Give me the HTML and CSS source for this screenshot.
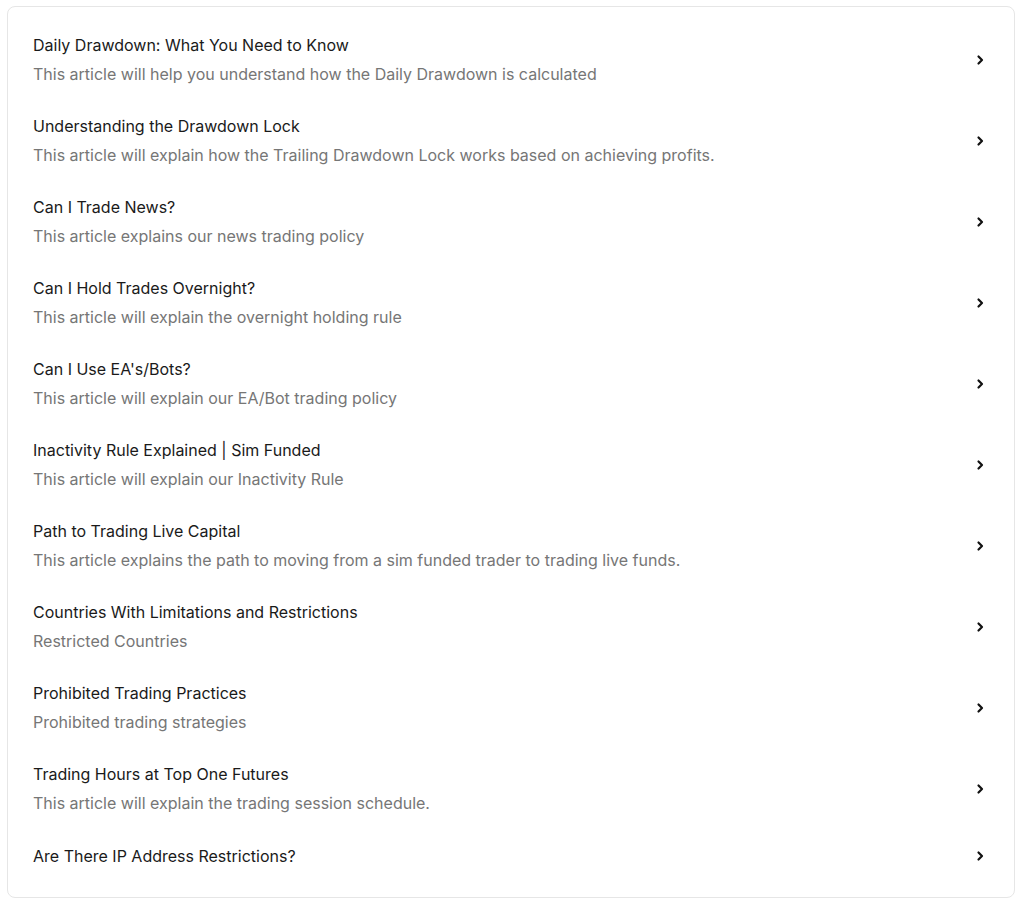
FILE: index.html
```html
<!DOCTYPE html>
<html lang="en">
<head>
<meta charset="utf-8">
<link rel="stylesheet" href="styles.css">
</head>
<body>
<div class="card">
  <a class="row"><div class="text"><div class="title">Daily Drawdown: What You Need to Know</div><div class="desc">This article will help you understand how the Daily Drawdown is calculated</div></div><svg class="chev" viewBox="0 0 8 12"><path d="M2.5 2.5l3.5 3.5-3.5 3.5"/></svg></a>
  <a class="row"><div class="text"><div class="title">Understanding the Drawdown Lock</div><div class="desc">This article will explain how the Trailing Drawdown Lock works based on achieving profits.</div></div><svg class="chev" viewBox="0 0 8 12"><path d="M2.5 2.5l3.5 3.5-3.5 3.5"/></svg></a>
  <a class="row"><div class="text"><div class="title">Can I Trade News?</div><div class="desc">This article explains our news trading policy</div></div><svg class="chev" viewBox="0 0 8 12"><path d="M2.5 2.5l3.5 3.5-3.5 3.5"/></svg></a>
  <a class="row"><div class="text"><div class="title">Can I Hold Trades Overnight?</div><div class="desc">This article will explain the overnight holding rule</div></div><svg class="chev" viewBox="0 0 8 12"><path d="M2.5 2.5l3.5 3.5-3.5 3.5"/></svg></a>
  <a class="row"><div class="text"><div class="title">Can I Use EA's/Bots?</div><div class="desc">This article will explain our EA/Bot trading policy</div></div><svg class="chev" viewBox="0 0 8 12"><path d="M2.5 2.5l3.5 3.5-3.5 3.5"/></svg></a>
  <a class="row"><div class="text"><div class="title">Inactivity Rule Explained | Sim Funded</div><div class="desc">This article will explain our Inactivity Rule</div></div><svg class="chev" viewBox="0 0 8 12"><path d="M2.5 2.5l3.5 3.5-3.5 3.5"/></svg></a>
  <a class="row"><div class="text"><div class="title">Path to Trading Live Capital</div><div class="desc">This article explains the path to moving from a sim funded trader to trading live funds.</div></div><svg class="chev" viewBox="0 0 8 12"><path d="M2.5 2.5l3.5 3.5-3.5 3.5"/></svg></a>
  <a class="row"><div class="text"><div class="title">Countries With Limitations and Restrictions</div><div class="desc">Restricted Countries</div></div><svg class="chev" viewBox="0 0 8 12"><path d="M2.5 2.5l3.5 3.5-3.5 3.5"/></svg></a>
  <a class="row"><div class="text"><div class="title">Prohibited Trading Practices</div><div class="desc">Prohibited trading strategies</div></div><svg class="chev" viewBox="0 0 8 12"><path d="M2.5 2.5l3.5 3.5-3.5 3.5"/></svg></a>
  <a class="row"><div class="text"><div class="title">Trading Hours at Top One Futures</div><div class="desc">This article will explain the trading session schedule.</div></div><svg class="chev" viewBox="0 0 8 12"><path d="M2.5 2.5l3.5 3.5-3.5 3.5"/></svg></a>
  <a class="row"><div class="text"><div class="title">Are There IP Address Restrictions?</div></div><svg class="chev" viewBox="0 0 8 12"><path d="M2.5 2.5l3.5 3.5-3.5 3.5"/></svg></a>
</div>
</body>
</html>
```

FILE: styles.css
```css
html, body {
  margin: 0;
  padding: 0;
  background: #ffffff;
}
body {
  padding: 6px 9px 6px 7px;
  font-family: Inter, "Liberation Sans", sans-serif;
  -webkit-font-smoothing: antialiased;
}
.card {
  border: 1px solid #e6e6e6;
  border-radius: 8px;
  padding: 12px 12px 15px 12px;
  display: flex;
  flex-direction: column;
}
.row {
  display: flex;
  align-items: center;
  justify-content: space-between;
  padding: 14px 18px 14px 13px;
  color: inherit;
  text-decoration: none;
}
.row:last-child {
  padding-top: 15px;
}
.text {
  display: flex;
  flex-direction: column;
  gap: 5px;
}
.title {
  font-size: 16px;
  line-height: 24px;
  color: #1a1a1a;
}
.desc {
  font-size: 16px;
  line-height: 24px;
  color: #767676;
}
.chev {
  width: 8px;
  height: 12px;
  flex: none;
}
.chev path {
  fill: none;
  stroke: #111111;
  stroke-width: 2.2;
  stroke-linecap: round;
  stroke-linejoin: round;
}
```
